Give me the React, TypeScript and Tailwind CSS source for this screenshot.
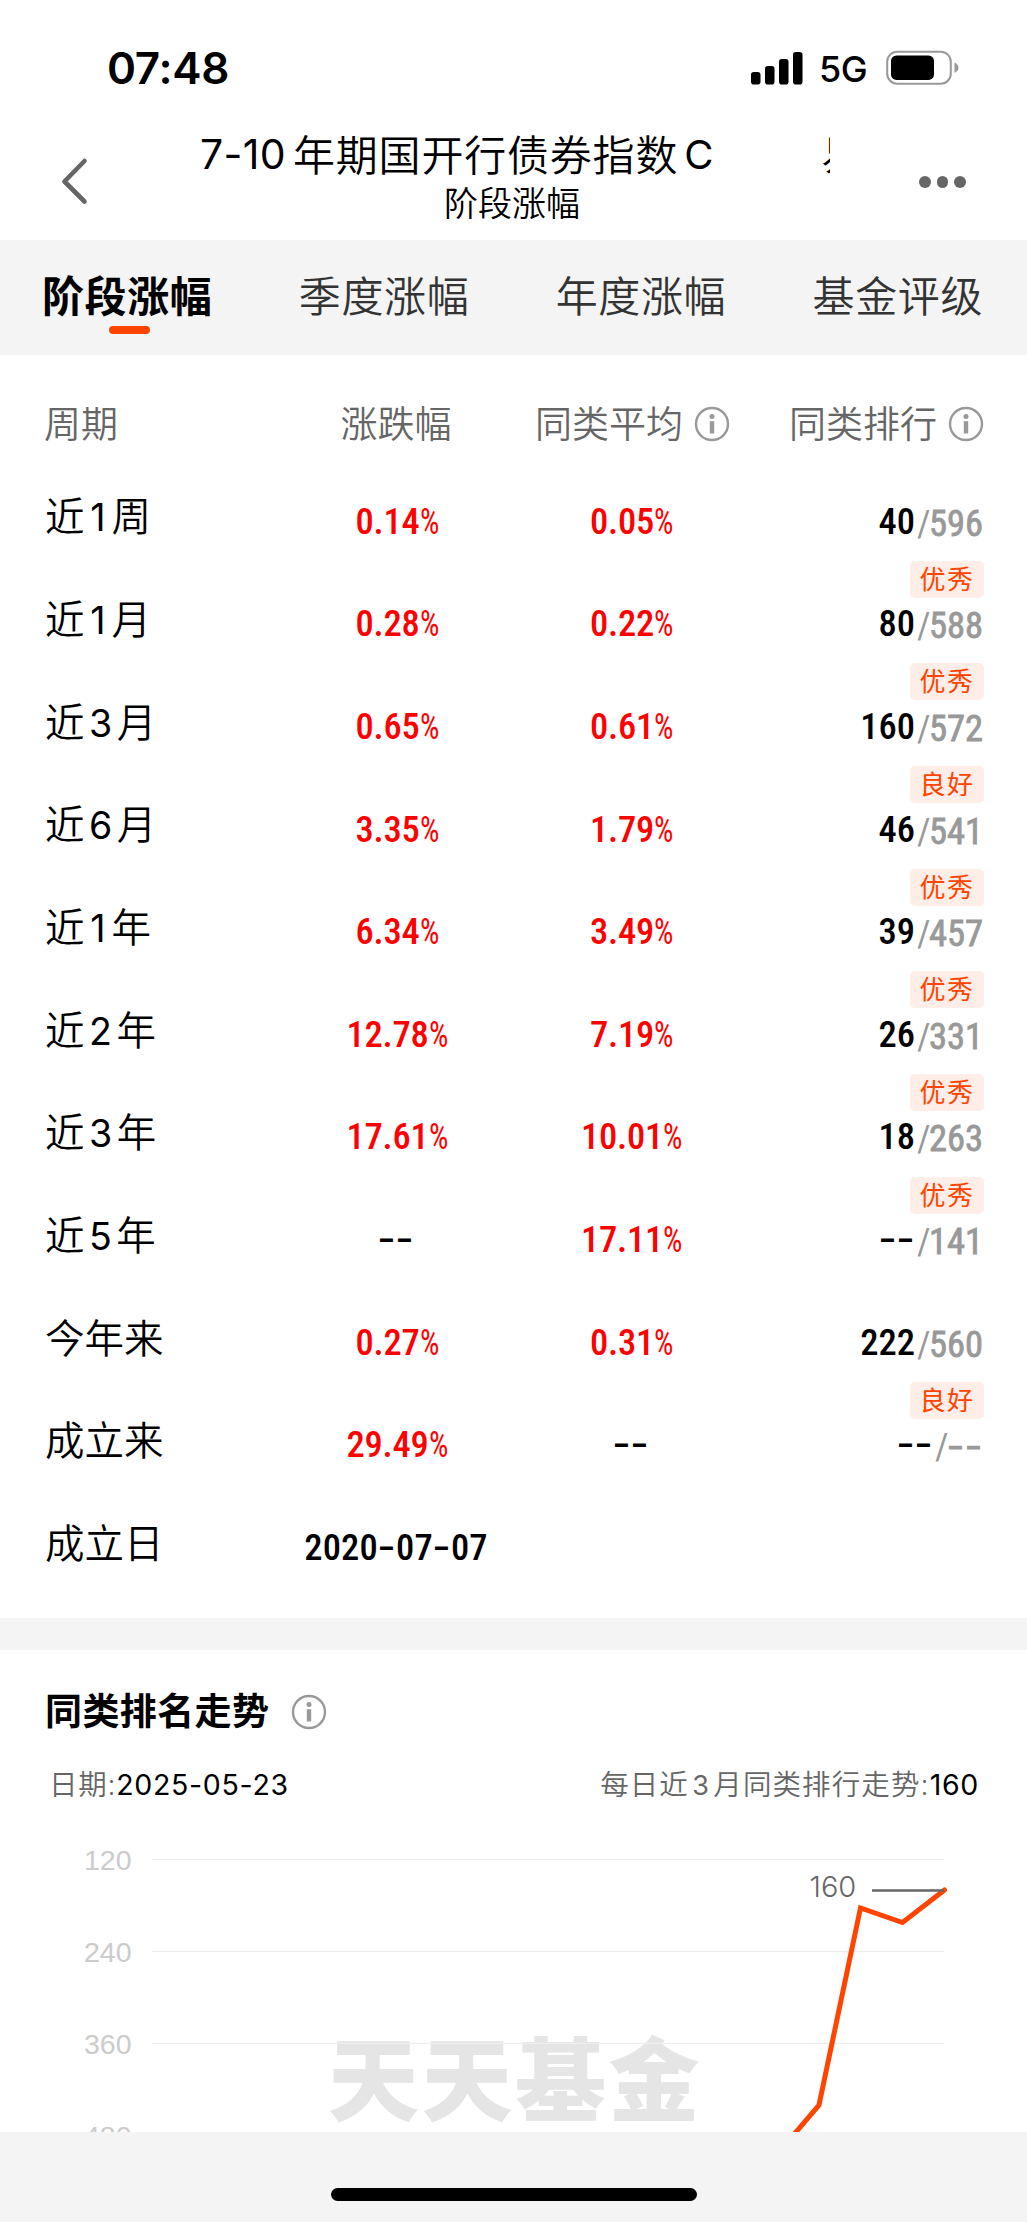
import React from 'react';

interface PeriodRow {
  period: string;
  change: string;
  average: string;
  rank?: string;
  total?: string;
  level?: string;
}

const tabs = ['阶段涨幅', '季度涨幅', '年度涨幅', '基金评级'];

const rows: PeriodRow[] = [
  { period: '近1周', change: '0.14%', average: '0.05%', rank: '40', total: '596', level: '优秀' },
  { period: '近1月', change: '0.28%', average: '0.22%', rank: '80', total: '588', level: '优秀' },
  { period: '近3月', change: '0.65%', average: '0.61%', rank: '160', total: '572', level: '良好' },
  { period: '近6月', change: '3.35%', average: '1.79%', rank: '46', total: '541', level: '优秀' },
  { period: '近1年', change: '6.34%', average: '3.49%', rank: '39', total: '457', level: '优秀' },
  { period: '近2年', change: '12.78%', average: '7.19%', rank: '26', total: '331', level: '优秀' },
  { period: '近3年', change: '17.61%', average: '10.01%', rank: '18', total: '263', level: '优秀' },
  { period: '近5年', change: '--', average: '17.11%', rank: '--', total: '141' },
  { period: '今年来', change: '0.27%', average: '0.31%', rank: '222', total: '560', level: '良好' },
  { period: '成立来', change: '29.49%', average: '--', rank: '--', total: '--' },
  { period: '成立日', change: '2020-07-07', average: '' },
];

function InfoIcon() {
  return (
    <svg width="36" height="36" viewBox="0 0 36 36" fill="none" className="shrink-0">
      <circle cx="18" cy="18" r="16" stroke="#999" strokeWidth="2.4" />
      <circle cx="18" cy="10.600" r="2.500" fill="#999" />
      <path d="M15.800 15.200h4.400v12.300h-4.400z" fill="#999" />
    </svg>
  );
}

// digits sit in a slightly heavier face with a thin gap on both sides
function Mixed({ text }: { text: string }) {
  return (
    <>
      {text.split(/(\d+)/).map((part, i) =>
        /\d/.test(part) ? (
          <span key={i} className={part === '1' ? 'mx-[0.155em] text-[0.95em] font-normal' : 'mx-[0.12em] text-[0.95em] font-normal'}>
            {part}
          </span>
        ) : (
          part
        )
      )}
    </>
  );
}

function Dash() {
  return (
    <span className="w-[18px] text-center">
      <span className="inline-block scale-x-[1.6]">-</span>
    </span>
  );
}

function Dashes() {
  return (
    <span className="flex">
      <Dash />
      <Dash />
    </span>
  );
}

function Value({ value }: { value: string }) {
  if (value.endsWith('%')) {
    return (
      <span className="flex tracking-[-0.2px] text-[#ff0000]">
        {value.slice(0, -1)}
        <span className="w-[17px]">
          <span className="inline-block origin-left scale-x-[0.84] font-normal">%</span>
        </span>
      </span>
    );
  }
  if (value === '--') {
    return <Dashes />;
  }
  return (
    <span className="flex tracking-[0.2px]">
      {value.split('-').map((part, i) => (
        <React.Fragment key={i}>
          {i > 0 && <Dash />}
          {part}
        </React.Fragment>
      ))}
    </span>
  );
}

function StatusBar() {
  return (
    <div className="flex h-[120px] items-center pt-4 pl-[107px] pr-[68px]">
      <span className="flex-1 text-[44px] font-semibold leading-none tracking-[-0.3px]">07:48</span>
      <svg width="52" height="34" viewBox="0 0 52 34" className="mr-[16px]">
        <rect x="0" y="21" width="9.500" height="12.500" rx="2.800" />
        <rect x="14" y="15" width="9.500" height="18.500" rx="2.800" />
        <rect x="28" y="8" width="9.500" height="25.500" rx="2.800" />
        <rect x="42" y="1" width="9.500" height="32.500" rx="2.800" />
      </svg>
      <span className="mt-[2px] w-[51px] text-[36px] font-medium leading-none tracking-[-0.5px]">5G</span>
      <svg width="73" height="36" viewBox="0 0 73 36" className="ml-[16px]">
        <rect x="1.200" y="1.700" width="63.600" height="32" rx="10" fill="none" stroke="#999" strokeWidth="2" />
        <rect x="5" y="5.500" width="43" height="24.400" rx="5.500" />
        <path d="M68.500 12.500q4 2 4 5.200t-4 5.200z" fill="#999" />
      </svg>
    </div>
  );
}

function NavBar() {
  return (
    <div className="flex h-[120px] items-start">
      <svg width="28" height="48" viewBox="0 0 28 48" fill="none" className="mt-[37px] ml-[60px] shrink-0">
        <path d="M24.500 4L4.500 24.500L24.500 44.500" stroke="#666" strokeWidth="4.600" strokeLinecap="round" strokeLinejoin="round" />
      </svg>
      <div className="ml-[108px] w-[634px]">
        <div className="flex h-[70px] items-center overflow-hidden whitespace-nowrap text-[42px] font-[350] tracking-[0.8px]">
          <span className="w-[97px] shrink-0 pl-[4px] text-[41px] font-normal tracking-[0.3px]">7-10</span>
          <span className="shrink-0">年期国开行债券指数</span>
          <span className="w-[143px] shrink-0 pl-[6px] text-[40px] font-normal">C</span>
          <span className="shrink-0">易方达</span>
        </div>
        <div className="-mt-[6px] pr-[2px] text-center text-[34px] font-[350] leading-[40px]">阶段涨幅</div>
      </div>
      <div className="mt-[56px] ml-[89px] flex gap-[6px]">
        <i className="size-[11.600px] rounded-full bg-[#666]" />
        <i className="size-[11.600px] rounded-full bg-[#666]" />
        <i className="size-[11.600px] rounded-full bg-[#666]" />
      </div>
    </div>
  );
}

function TabBar() {
  return (
    <div className="flex h-[115px] justify-between bg-[#f4f4f4] pl-[42px] pr-[44px] text-[42px] tracking-[0.600px] text-[#333]">
      {tabs.map((tab, i) => (
        <div key={tab} className="flex flex-col items-center">
          <span className={i === 0 ? 'pt-[27px] font-bold leading-[59px] text-black' : 'pt-[27px] font-[350] leading-[59px]'}>
            {tab}
          </span>
          {i === 0 && <i className="ml-[4px] h-[8px] w-[41px] rounded-full bg-[#ff4400]" />}
        </div>
      ))}
    </div>
  );
}

function PeriodTable() {
  return (
    <div className="h-[1263px] bg-white pl-[44px] pr-[43px]">
      <div className="grid h-[111.700px] grid-cols-[242px_220px_248px_1fr] items-center pt-[27px] text-[37px] font-[350] text-[#666]">
        <span>周期</span>
        <span className="text-center">涨跌幅</span>
        <span className="flex items-center gap-[11px] pl-[29px]">同类平均<InfoIcon /></span>
        <span className="flex items-center justify-end gap-[11px]">同类排行<InfoIcon /></span>
      </div>
      {rows.map((row) => (
        <div key={row.period} className="relative grid h-[102.650px] grid-cols-[242px_220px_248px_1fr] items-center">
          <span className="pl-px text-[39.500px] font-[350]"><Mixed text={row.period} /></span>
          <div className="flex justify-center whitespace-nowrap pt-[8px] font-['Roboto_Condensed'] text-[36.500px] font-medium">
            <Value value={row.change} />
          </div>
          <div className="flex justify-center pt-[8px] pl-[1px] font-['Roboto_Condensed'] text-[36.500px] font-medium">
            <Value value={row.average} />
          </div>
          {row.rank && (
            <div className="flex justify-end pt-[8px] pr-[1px] font-['Roboto_Condensed'] text-[36.500px]">
              <span className="font-medium">{row.rank === '--' ? <Dashes /> : row.rank}</span>
              <span className="-mb-[2px] flex pt-[2px] text-[#999]">
                <span className="w-[14px] pl-[2px]">/</span>
                <span className="[-webkit-text-stroke:0.8px_#999]">
                  {row.total === '--' ? <Dashes /> : row.total}
                </span>
              </span>
            </div>
          )}
          {row.level && (
            <span className="absolute top-[94px] right-0 z-10 flex h-[37px] w-[74px] items-center justify-center rounded-[5px] bg-[#ffede7] text-[26px] tracking-[1.500px] text-[#ff4400]">
              {row.level}
            </span>
          )}
        </div>
      ))}
    </div>
  );
}

function RankTrend() {
  return (
    <div className="h-[482px] overflow-hidden bg-white">
      <div className="flex h-[124px] items-center gap-[22px] pl-[45px] text-[37px] font-bold tracking-[0.4px]">
        同类排名走势<InfoIcon />
      </div>
      <div className="flex h-[22px] items-center justify-between pl-[49px] pr-[48px] text-[28.500px] font-[350] tracking-[0.700px] text-[#666]">
        <span>日期:<span className="font-normal text-black">2025-05-23</span></span>
        <span className="tracking-[1.1px]"><Mixed text="每日近3月同类排行走势" />:<span className="font-normal tracking-[0.700px] text-black">160</span></span>
      </div>
      <div className="relative">
        <div className="absolute top-[230px] left-[328px] whitespace-nowrap text-[91px] font-black leading-[110px] tracking-[2.500px] text-[#e5e5e5]">
          天天基金
        </div>
        <svg width="1027" height="336" viewBox="0 1796 1027 336" className="relative block">
          <g stroke="#eee" strokeWidth="1.300">
            <path d="M151.500 1859.300H944M151.500 1951.300H944M151.500 2043.400H944" />
          </g>
          <g fill="#ccc" fontSize="28.500" textAnchor="end" fontFamily="Liberation Sans">
            <text x="131.500" y="1870">120</text>
            <text x="131.500" y="1962">240</text>
            <text x="131.500" y="2054">360</text>
            <text x="131.500" y="2146">480</text>
          </g>
          <text x="809.500" y="1897" fontSize="29" fill="#666" className="font-[350]">160</text>
          <path d="M779 2152L819 2105L860.500 1908L902.500 1922.500L944.500 1890" fill="none" stroke="#ff4400" strokeWidth="5" strokeLinecap="round" />
          <path d="M872 1890.500H944" stroke="#666" strokeWidth="2.500" />
        </svg>
      </div>
    </div>
  );
}

export default function App() {
  return (
    <div className="flex h-[2222px] w-[1027px] flex-col overflow-hidden bg-white font-[Inter,'Noto_Sans_CJK_SC',sans-serif] text-black">
      <StatusBar />
      <NavBar />
      <TabBar />
      <PeriodTable />
      <div className="h-[32px] bg-[#f4f4f4]" />
      <RankTrend />
      <div className="flex h-[90px] justify-center bg-[#f4f4f4] pt-[56px]">
        <i className="h-[13px] w-[366px] rounded-full bg-black" />
      </div>
    </div>
  );
}
